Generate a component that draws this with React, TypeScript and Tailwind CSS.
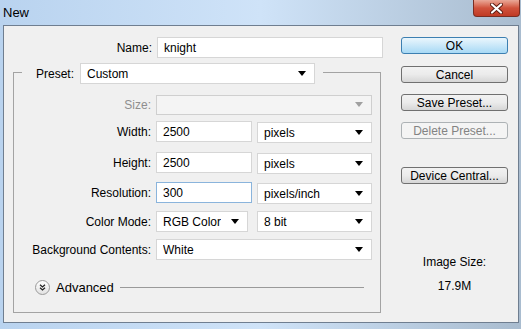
import type { ReactNode } from "react"

const Arrow = ({ disabled = false }: { disabled?: boolean }) => (
    <svg width="8" height="5" viewBox="0 0 8 5" className="flex-shrink-0">
        <path d="M0 0 H8 L4 5 Z" fill={disabled ? "#a0a0a0" : "#000"} />
    </svg>
)

const Select = ({ value, className = "", disabled = false }: { value?: string; className?: string; disabled?: boolean }) => (
    <div
        className={`flex items-center justify-between pl-[6px] pr-[8px] border ${disabled ? "bg-[#f4f4f4] border-[#cfcfcf]" : "bg-white border-[#d6d6d6]"} ${className}`}
    >
        <span className="truncate">{value}</span>
        <Arrow disabled={disabled} />
    </div>
)

const Input = ({ value, className = "", focused = false }: { value: string; className?: string; focused?: boolean }) => (
    <div
        className={`flex items-center pl-[6px] bg-white border ${focused ? "border-[#8ab4dc]" : "border-[#d6d6d6]"} ${className}`}
    >
        {value}
    </div>
)

const Row = ({ label, children, className = "", muted = false }: { label: string; children: ReactNode; className?: string; muted?: boolean }) => (
    <div className={`flex items-center h-[21px] ${className}`}>
        <div className={`w-[138px] text-right pr-[1px] ${muted ? "text-[#8e8e8e]" : ""}`}>{label}</div>
        <div className="flex items-center gap-[5px] ml-[4px]">{children}</div>
    </div>
)

const Button = ({ children, variant = "normal", className = "" }: { children: ReactNode; variant?: "default" | "normal" | "disabled"; className?: string }) => {
    const styles = {
        default: "border-[#3c7fb1] bg-gradient-to-b from-[#eaf6fd] to-[#a7d9f5] text-black",
        normal: "border-[#707070] bg-gradient-to-b from-[#f2f2f2] via-[#ebebeb] to-[#d6d6d6] text-black",
        disabled: "border-[#adb2b5] bg-[#f4f4f4] text-[#838383]",
    }
    return (
        <div className={`w-[107px] h-[17px] rounded-[3px] border flex items-center justify-center leading-none ${styles[variant]} ${className}`}>
            {children}
        </div>
    )
}

export default function App() {
    return (
        <div
            className="w-[521px] h-[329px] overflow-hidden flex flex-col bg-gradient-to-r from-[#b9d3ef] via-[#cfe3f8] to-[#a9bccf] text-[12px] text-black"
            style={{ fontFamily: '"Liberation Sans", Arial, sans-serif' }}
        >
            {/* Title bar */}
            <div className="h-[25px] flex items-start justify-between flex-shrink-0">
                <span className="pl-[3px] pt-[5px] text-[13px] leading-[15px]">New</span>
                <div className="w-[47px] h-[17px] mr-[1px] rounded-b-[4px] border border-t-0 border-[#7a2d22] bg-gradient-to-b from-[#e9a898] via-[#d0523c] to-[#c03a24] flex items-center justify-center">
                    <svg width="13" height="11" viewBox="0 0 13 11">
                        <path d="M2 1.5 L11 9.5 M11 1.5 L2 9.5" stroke="#5a1a10" strokeWidth="4" strokeLinecap="round" />
                        <path d="M2 1.5 L11 9.5 M11 1.5 L2 9.5" stroke="#fff" strokeWidth="2.2" strokeLinecap="round" />
                    </svg>
                </div>
            </div>

            {/* Dialog body */}
            <div className="ml-[3px] w-[516px] h-[298px] border border-[#6f7e90] bg-[#f0f0f0] flex">
                {/* Left column */}
                <div className="w-[379px] pl-[9px] pt-[11px] flex-shrink-0">
                    <div className="flex items-center">
                        <div className="w-[139px] text-right">Name:</div>
                        <Input value="knight" className="ml-[5px] w-[226px] h-[21px]" />
                    </div>

                    <div className="mt-[14px] w-[368px] h-[241px] border border-[#a3a3a3]">
                        <div className="-mt-[10px] ml-[8px] w-[301px] h-[21px] bg-[#f0f0f0] flex items-center pl-[14px]">
                            <span>Preset:</span>
                            <Select value="Custom" className="ml-[6px] w-[235px] h-[21px]" />
                        </div>

                        <Row label="Size:" muted className="mt-[10px]">
                            <Select disabled className="w-[216px] h-[20px]" />
                        </Row>
                        <Row label="Width:" className="mt-[6px]">
                            <Input value="2500" className="w-[96px] h-[21px]" />
                            <Select value="pixels" className="w-[115px] h-[21px] translate-y-[1px]" />
                        </Row>
                        <Row label="Height:" className="mt-[10px]">
                            <Input value="2500" className="w-[96px] h-[21px]" />
                            <Select value="pixels" className="w-[115px] h-[21px] translate-y-[1px]" />
                        </Row>
                        <Row label="Resolution:" className="mt-[9px]">
                            <Input value="300" focused className="w-[96px] h-[21px]" />
                            <Select value="pixels/inch" className="w-[115px] h-[21px] translate-y-[1px]" />
                        </Row>
                        <Row label="Color Mode:" className="mt-[8px]">
                            <Select value="RGB Color" className="w-[92px] h-[21px]" />
                            <Select value="8 bit" className="ml-[4px] w-[115px] h-[21px]" />
                        </Row>
                        <Row label="Background Contents:" className="mt-[7px]">
                            <Select value="White" className="w-[216px] h-[21px]" />
                        </Row>

                        {/* Advanced */}
                        <div className="mt-[20px] h-[15px] flex items-center pl-[21px]">
                            <div className="w-[15px] h-[15px] rounded-full border border-[#9a9a9a] bg-gradient-to-b from-white to-[#e2e2e2] flex items-center justify-center">
                                <svg width="7" height="7" viewBox="0 0 7 7">
                                    <path d="M1 0.8 L3.5 3 L6 0.8 M1 3.8 L3.5 6 L6 3.8" stroke="#222" strokeWidth="1.3" fill="none" />
                                </svg>
                            </div>
                            <span className="ml-[6px] text-[13px] leading-[15px]">Advanced</span>
                            <div className="ml-[6px] w-[244px] h-px bg-[#9a9a9a]" />
                        </div>
                    </div>
                </div>

                {/* Right column */}
                <div className="pl-[18px] pt-[11px] flex flex-col">
                    <Button variant="default">OK</Button>
                    <Button className="mt-[12px]">Cancel</Button>
                    <Button className="mt-[11px]">Save Preset...</Button>
                    <Button variant="disabled" className="mt-[11px]">Delete Preset...</Button>
                    <Button className="mt-[28px]">Device Central...</Button>

                    <div className="mt-[71px] w-[107px] text-center leading-[15px]">Image Size:</div>
                    <div className="mt-[9px] w-[107px] text-center leading-[15px]">17.9M</div>
                </div>
            </div>
        </div>
    )
}
